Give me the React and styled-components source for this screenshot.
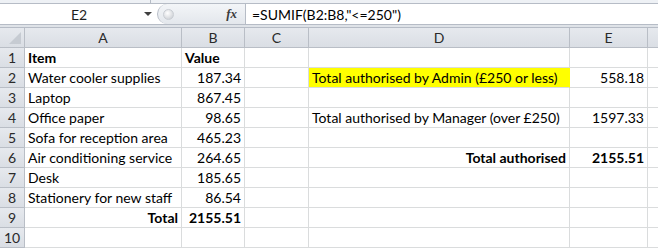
import React from "react";
import styled, { createGlobalStyle } from "styled-components";

const GlobalStyle = createGlobalStyle`
  html, body { margin: 0; padding: 0; background: #ffffff; }
  body { width: 658px; height: 248px; overflow: hidden; font-family: "Lato", "Liberation Sans", sans-serif; }
`;

const Sheet = styled.div`
  width: 658px;
  height: 248px;
  overflow: hidden;
  display: flex;
  flex-direction: column;
  background: #ffffff;
`;

const TopStrip = styled.div`
  height: 4px;
  background: #eef1f5;
  border-bottom: 1px solid #b6bcc6;
  display: flex;
`;

const TopDivider = styled.div`
  width: 150px;
  border-right: 1px solid #b6bcc6;
`;

const FormulaBar = styled.div`
  height: 23px;
  display: flex;
  border-bottom: 1px solid #b6bcc6;
`;

const NameBox = styled.div`
  width: 157px;
  display: flex;
  align-items: center;
  background: #ffffff;
  font-size: 14px;
  color: #1e1e1e;
`;

const NameText = styled.div`
  flex: 1;
  text-align: center;
  padding-left: 14px;
`;

const DropArrow = styled.div`
  width: 0;
  height: 0;
  border-left: 4px solid transparent;
  border-right: 4px solid transparent;
  border-top: 4px solid #404040;
  margin-right: 5px;
`;

const FxArea = styled.div`
  width: 87px;
  display: flex;
  align-items: center;
  justify-content: space-between;
  background: linear-gradient(#f3f5f8, #e3e7ec);
  border-left: 1px solid #b6bcc6;
  border-right: 1px solid #b6bcc6;
  border-top-left-radius: 12px;
  border-bottom-left-radius: 12px;
`;

const Handle = styled.div`
  width: 9px;
  height: 9px;
  margin-left: 5px;
  border-radius: 50%;
  background: radial-gradient(circle at 40% 35%, #ffffff, #c4c8ce);
  border: 1px solid #c9cdd3;
`;

const FxLabel = styled.span`
  font-family: "Liberation Serif", "DejaVu Serif", serif;
  font-style: italic;
  font-weight: bold;
  font-size: 13px;
  color: #3c3c3c;
  margin-right: 8px;
`;

const FormulaText = styled.div`
  flex: 1;
  display: flex;
  align-items: center;
  padding-left: 6px;
  font-size: 14px;
  color: #000000;
  white-space: nowrap;
`;

const Gap = styled.div`
  height: 2px;
  background: #dfe3e8;
  border-bottom: 1px solid #b6bcc6;
`;

const Grid = styled.div`
  display: grid;
  grid-template-columns: 25px 157px 63px 64px 261px 78px 20px;
  grid-auto-rows: 20px;
`;

const Header = styled.div`
  display: flex;
  align-items: center;
  justify-content: center;
  background: linear-gradient(#e6e9ee, #dadee4);
  border-right: 1px solid #b9bec6;
  border-bottom: 1px solid #b9bec6;
  font-size: 14px;
  color: #2a2a2a;
  box-sizing: border-box;
`;

const Corner = styled(Header)`
  position: relative;
  &::after {
    content: "";
    position: absolute;
    right: 3px;
    bottom: 3px;
    width: 0;
    height: 0;
    border-left: 12px solid transparent;
    border-bottom: 12px solid #c6cbd2;
  }
`;

const Cell = styled.div`
  display: flex;
  align-items: center;
  justify-content: ${(p) => (p.$right ? "flex-end" : "flex-start")};
  padding: 0 3px;
  background: ${(p) => (p.$fill ? p.$fill : "#ffffff")};
  border-right: 1px solid ${(p) => (p.$fill ? p.$fill : "#dadcdd")};
  border-bottom: 1px solid #dadcdd;
  font-size: 14px;
  font-weight: ${(p) => (p.$bold ? 700 : 400)};
  color: #000000;
  white-space: nowrap;
  overflow: visible;
  box-sizing: border-box;
`;

const columns = ["A", "B", "C", "D", "E", ""];

const rows = [
  [{ t: "Item", b: true }, { t: "Value", b: true }, {}, {}, {}],
  [{ t: "Water cooler supplies" }, { t: "187.34", r: true }, {}, { t: "Total authorised by Admin (£250 or less)", fill: "#ffff00" }, { t: "558.18", r: true }],
  [{ t: "Laptop" }, { t: "867.45", r: true }, {}, {}, {}],
  [{ t: "Office paper" }, { t: "98.65", r: true }, {}, { t: "Total authorised by Manager (over £250)" }, { t: "1597.33", r: true }],
  [{ t: "Sofa for reception area" }, { t: "465.23", r: true }, {}, {}, {}],
  [{ t: "Air conditioning service" }, { t: "264.65", r: true }, {}, { t: "Total authorised", b: true, r: true }, { t: "2155.51", b: true, r: true }],
  [{ t: "Desk" }, { t: "185.65", r: true }, {}, {}, {}],
  [{ t: "Stationery for new staff" }, { t: "86.54", r: true }, {}, {}, {}],
  [{ t: "Total", b: true, r: true }, { t: "2155.51", b: true, r: true }, {}, {}, {}],
  [{}, {}, {}, {}, {}],
];

export default function App() {
  return (
    <>
      <GlobalStyle />
      <Sheet>
        <TopStrip>
          <TopDivider />
        </TopStrip>
        <FormulaBar>
          <NameBox>
            <NameText>E2</NameText>
            <DropArrow />
          </NameBox>
          <FxArea>
            <Handle />
            <FxLabel>fx</FxLabel>
          </FxArea>
          <FormulaText>=SUMIF(B2:B8,"&lt;=250")</FormulaText>
        </FormulaBar>
        <Gap />
        <Grid>
          <Corner />
          {columns.map((c, i) => (
            <Header key={"h" + i}>{c}</Header>
          ))}
          {rows.map((row, ri) => (
            <React.Fragment key={ri}>
              <Header>{ri + 1}</Header>
              {row.map((cell, ci) => (
                <Cell key={ci} $bold={cell.b} $right={cell.r} $fill={cell.fill}>
                  {cell.t}
                </Cell>
              ))}
              <Cell />
            </React.Fragment>
          ))}
        </Grid>
      </Sheet>
    </>
  );
}
